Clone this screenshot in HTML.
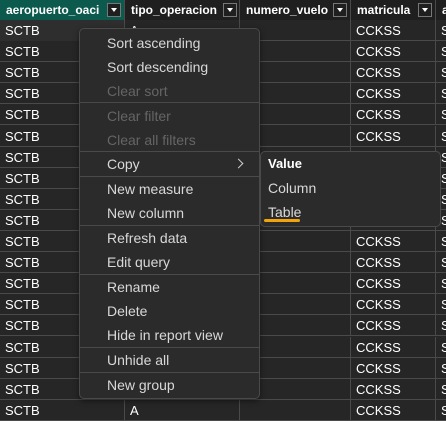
<!DOCTYPE html>
<html><head><style>
*{margin:0;padding:0;box-sizing:border-box}
body{width:446px;height:410px;overflow:hidden;background:#262626;font-family:"Liberation Sans",sans-serif;position:relative;color:#fff}
.h{position:absolute;top:0;height:20px;background:#1f1f1f;border-right:1px solid #4a4a4a;font-weight:bold;font-size:12px;line-height:20px;padding-left:6px;color:#fff;overflow:hidden;white-space:nowrap}
.btn{position:absolute;top:3px;width:14px;height:14px;border:1px solid #777;background:#1f1f1f}
.btn:after{content:"";position:absolute;left:3px;top:4px;border-left:3.5px solid transparent;border-right:3.5px solid transparent;border-top:4px solid #fff}
.row{position:absolute;left:0;width:446px;height:21px;border-bottom:1px solid #4a4a4a}
.c{position:absolute;top:0;height:21px;border-right:1px solid #4a4a4a;font-size:13px;line-height:21px;padding-left:5px}
.menu{position:absolute;left:79px;top:28px;width:181px;height:371px;background:#2b2b2b;border:1px solid #4a4a4a;border-radius:5px;box-shadow:0 2px 6px rgba(0,0,0,.5)}
.it{position:absolute;left:27px;font-size:14px;color:#d8d8d8}
.dis{color:#656565}
.sep{position:absolute;left:0;right:0;height:1px;background:#4a4a4a}
.sub{position:absolute;left:260px;top:151px;width:181px;height:76px;background:#2b2b2b;border:1px solid #4a4a4a;border-radius:5px}
</style></head><body>
<div class="h" style="left:0;width:125px;background:#0b5a4d">aeropuerto_oaci</div>
<div class="btn" style="left:107px"></div>
<div class="h" style="left:125px;width:115px">tipo_operacion</div>
<div class="btn" style="left:223px"></div>
<div class="h" style="left:240px;width:111px">numero_vuelo</div>
<div class="btn" style="left:333px"></div>
<div class="h" style="left:351px;width:85px">matricula</div>
<div class="btn" style="left:418px"></div>
<div class="h" style="left:436px;width:20px">a</div>
<div id="rows"></div>
<script>
var h='';for(var k=0;k<19;k++){var t=20+k*21.1;h+='<div class="row" style="top:'+t+'px"><div class="c" style="left:0;width:125px'+(k==0?';background:#2e2e2e':'')+'">SCTB</div><div class="c" style="left:125px;width:115px">A</div><div class="c" style="left:240px;width:111px"></div><div class="c" style="left:351px;width:85px">CCKSS</div><div class="c" style="left:436px;width:20px;border:0">S</div></div>';}
document.getElementById('rows').innerHTML=h;
</script>
<div class="menu">
<div class="it" style="top:6px">Sort ascending</div>
<div class="it" style="top:30px">Sort descending</div>
<div class="it dis" style="top:54px">Clear sort</div>
<div class="sep" style="top:73px"></div>
<div class="it dis" style="top:79px">Clear filter</div>
<div class="it dis" style="top:103px">Clear all filters</div>
<div class="sep" style="top:122px"></div>
<div class="it" style="top:127px">Copy</div>
<div style="position:absolute;left:155px;top:131px;width:7px;height:7px;border-right:1px solid #ccc;border-top:1px solid #ccc;transform:rotate(45deg)"></div>
<div class="sep" style="top:147px"></div>
<div class="it" style="top:152px">New measure</div>
<div class="it" style="top:176px">New column</div>
<div class="sep" style="top:196px"></div>
<div class="it" style="top:201px">Refresh data</div>
<div class="it" style="top:225px">Edit query</div>
<div class="sep" style="top:245px"></div>
<div class="it" style="top:250px">Rename</div>
<div class="it" style="top:274px">Delete</div>
<div class="it" style="top:298px">Hide in report view</div>
<div class="sep" style="top:318px"></div>
<div class="it" style="top:323px">Unhide all</div>
<div class="sep" style="top:343px"></div>
<div class="it" style="top:348px">New group</div>
</div>
<div class="sub">
<div class="it" style="left:7px;top:4px;font-weight:bold;color:#fff;font-size:13px">Value</div>
<div class="it" style="left:7px;top:28px">Column</div>
<div class="it" style="left:7px;top:52px">Table</div>
<div style="position:absolute;left:3px;top:67px;width:36px;height:3px;background:#f0a30a;border-radius:2px"></div>
</div>
</body></html>
